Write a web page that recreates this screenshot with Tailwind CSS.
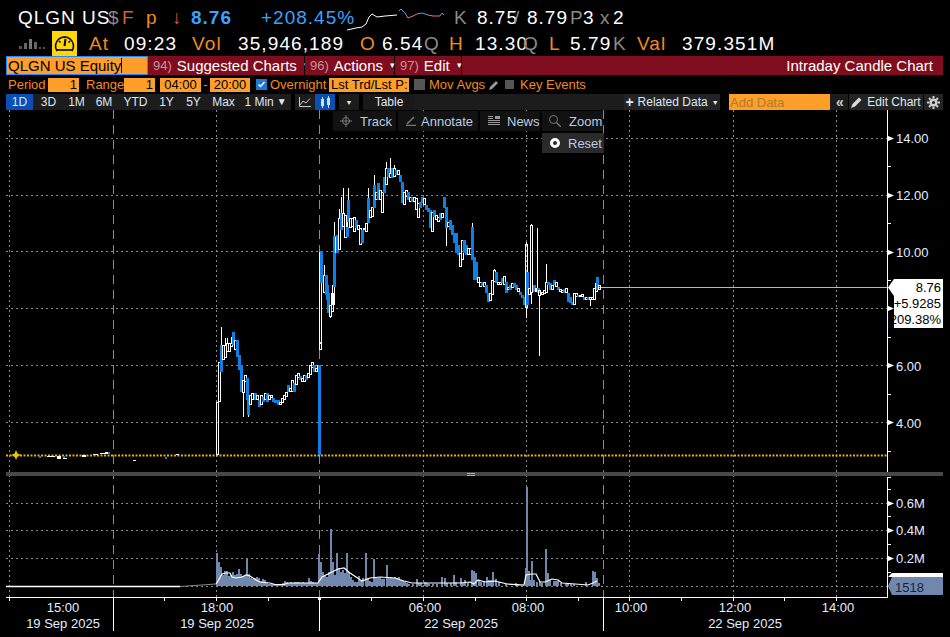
<!DOCTYPE html>
<html lang="en">
<head>
    <meta charset="UTF-8">
    <title>QLGN US Equity - Intraday Candle Chart</title>
    <script src="https://cdn.jsdelivr.net/npm/@tailwindcss/browser@4"></script>
</head>
<body class="bg-black text-white font-['Liberation_Sans',sans-serif] w-[950px] h-[637px] overflow-hidden relative">

    <!-- quote line 1 -->
    <div class="flex items-center h-[30px] pt-[5px] pl-[18px] text-[19px] tracking-[1px] whitespace-nowrap leading-none">
        <span class="w-[90px] shrink-0">QLGN US</span>
        <span class="w-[14px] shrink-0 text-[#8a8a8a]">$</span>
        <span class="w-[24px] shrink-0 text-[#c8643c]">F</span>
        <span class="w-[26px] shrink-0 text-[#f08c1e]">p</span>
        <span class="w-[19px] shrink-0 text-[#e8503c]">↓</span>
        <span class="w-[70px] shrink-0 text-[#3fa0ff] font-bold">8.76</span>
        <span class="w-[86px] shrink-0 text-[#3fa0ff]">+208.45%</span>
        <svg class="w-[107px] h-[30px] shrink-0" viewBox="347 0 107 30">
            <polyline fill="none" stroke="#fff" points="347,27 356,25 362,24 366,21 369,14 372,11 377,14 385,13 397,12" />
            <polyline fill="none" stroke="#4aa0e8" points="399,8 401,6 405,10" />
            <polyline fill="none" stroke="#e07a7a" points="405,10 408,15 413,13 417,11" />
            <polyline fill="none" stroke="#4aa0e8" points="417,11 422,10 428,12" />
            <polyline fill="none" stroke="#e07a7a" points="428,12 433,13 440,13" />
            <polyline fill="none" stroke="#4aa0e8" points="440,13 442,10 444,12" />
        </svg>
        <span class="w-[23px] shrink-0 text-[#8a8a8a]">K</span>
        <span class="w-[37px] shrink-0">8.75</span>
        <span class="w-[13px] shrink-0 text-[#8a8a8a]">/</span>
        <span class="w-[43px] shrink-0">8.79</span>
        <span class="w-[13px] shrink-0 text-[#8a8a8a]">P</span>
        <span class="w-[17px] shrink-0">3</span>
        <span class="w-[13px] shrink-0 text-[#8a8a8a]">x</span>
        <span class="shrink-0">2</span>
    </div>

    <!-- quote line 2 -->
    <div class="flex items-center h-[26px] pl-[19px] text-[19px] tracking-[1.1px] whitespace-nowrap leading-none">
        <svg class="w-[33px] h-[14px] shrink-0" viewBox="0 0 33 14">
            <rect x="0" y="10" width="3" height="3" fill="#555" />
            <rect x="5" y="7" width="3" height="6" fill="#666" />
            <rect x="10" y="3" width="3" height="10" fill="#777" />
            <rect x="15" y="6" width="3" height="7" fill="#666" />
            <rect x="20" y="11" width="2" height="2" fill="#555" />
            <rect x="24" y="11" width="2" height="2" fill="#555" />
        </svg>
        <span class="w-[25px] h-[25px] bg-[#ffd60a] shrink-0 flex items-center justify-center">
            <svg class="w-[21px] h-[19px]" viewBox="0 0 21 19" fill="none" stroke="#000" stroke-width="1.6">
                <path d="M3 17 A9 9 0 1 1 18 17" />
                <path d="M3 16 H18" />
                <path d="M10.5 12 L11.5 5" stroke-width="2" />
                <path d="M5 7 l1.500 1.500 M16 7 l-1.500 1.500 M10.500 2.500 v1.500" />
            </svg>
        </span>
        <span class="w-[12px] shrink-0"></span>
        <span class="w-[35px] shrink-0 text-[#f08c1e]">At</span>
        <span class="w-[68px] shrink-0">09:23</span>
        <span class="w-[46px] shrink-0 text-[#f08c1e]">Vol</span>
        <span class="w-[122px] shrink-0">35,946,189</span>
        <span class="w-[22px] shrink-0 text-[#f08c1e]">O</span>
        <span class="w-[42px] shrink-0">6.54</span>
        <span class="w-[25px] shrink-0 text-[#8a8a8a]">Q</span>
        <span class="w-[26px] shrink-0 text-[#f08c1e]">H</span>
        <span class="w-[48px] shrink-0">13.30</span>
        <span class="w-[26px] shrink-0 text-[#8a8a8a]">Q</span>
        <span class="w-[21px] shrink-0 text-[#f08c1e]">L</span>
        <span class="w-[43px] shrink-0">5.79</span>
        <span class="w-[24px] shrink-0 text-[#8a8a8a]">K</span>
        <span class="w-[45px] shrink-0 text-[#f08c1e]">Val</span>
        <span class="shrink-0">379.351M</span>
    </div>

    <!-- command bar -->
    <div class="flex h-[19px] ml-[6px] w-[937px] text-[15px] leading-none whitespace-nowrap">
        <div class="w-[142px] shrink-0 bg-[#ff9e28] border border-[#1e8cff] text-black text-[15px] pl-[1px] flex items-center">QLGN US Equity<span class="w-px h-[15px] bg-black"></span></div>
        <div class="w-[156px] shrink-0 bg-[#800d1e] flex items-center pl-[5px] gap-[5px] mr-[1px]">
            <span class="text-[#c8909a] text-[13px]">94)</span><span>Suggested Charts</span><span class="text-[9px] ml-[2px]">▾</span>
        </div>
        <div class="w-[89px] shrink-0 bg-[#800d1e] flex items-center pl-[5px] gap-[5px] mr-[1px]">
            <span class="text-[#c8909a] text-[13px]">96)</span><span>Actions</span><span class="text-[9px] ml-[2px]">▾</span>
        </div>
        <div class="w-[66px] shrink-0 bg-[#800d1e] flex items-center pl-[5px] gap-[5px] mr-[1px]">
            <span class="text-[#c8909a] text-[13px]">97)</span><span>Edit</span><span class="text-[9px] ml-[2px]">▾</span>
        </div>
        <div class="flex-1 bg-[#800d1e] flex items-center justify-end pr-[10px] text-[15px]">Intraday Candle Chart</div>
    </div>

    <!-- settings row -->
    <div class="flex items-center h-[19px] pl-[8px] text-[13px] leading-none text-[#f08c1e] whitespace-nowrap">
        <span class="w-[40px] shrink-0">Period</span>
        <span class="w-[31px] h-[14px] shrink-0 bg-[#ff9e28] text-black text-right pr-[2px] flex items-center justify-end">1</span>
        <span class="w-[7px] shrink-0"></span>
        <span class="w-[38px] shrink-0">Range</span>
        <span class="w-[31px] h-[14px] shrink-0 bg-[#ff9e28] text-black flex items-center justify-end pr-[2px]">1</span>
        <span class="w-[5px] shrink-0"></span>
        <span class="w-[41px] h-[14px] shrink-0 bg-[#ff9e28] text-black flex items-center justify-center">04:00</span>
        <span class="w-[9px] shrink-0 text-center">-</span>
        <span class="w-[40px] h-[14px] shrink-0 bg-[#ff9e28] text-black flex items-center justify-center">20:00</span>
        <span class="w-[6px] shrink-0"></span>
        <span class="w-[11px] h-[11px] shrink-0 bg-[#1e78d2] flex items-center justify-center">
            <svg class="w-[9px] h-[9px]" viewBox="0 0 9 9" fill="none" stroke="#fff" stroke-width="1.500"><path d="M1.500 4.500 L3.500 6.500 L7.500 2" /></svg>
        </span>
        <span class="w-[3px] shrink-0"></span>
        <span class="w-[59px] shrink-0">Overnight</span>
        <span class="w-[80px] h-[14px] shrink-0 bg-[#ff9e28] text-black flex items-center pl-[2px] overflow-hidden">Lst Trd/Lst P:</span>
        <span class="w-[5px] shrink-0"></span>
        <span class="w-[11px] h-[11px] shrink-0 bg-[#555]"></span>
        <span class="w-[4px] shrink-0"></span>
        <span class="w-[60px] shrink-0">Mov Avgs</span>
        <svg class="w-[12px] h-[12px] shrink-0 -ml-[1px]" viewBox="0 0 12 12" fill="#999"><path d="M1 11 L2 8 L8 2 L10 4 L4 10 Z" /></svg>
        <span class="w-[5px] shrink-0"></span>
        <span class="w-[9px] h-[9px] shrink-0 bg-[#555]"></span>
        <span class="w-[6px] shrink-0"></span>
        <span class="shrink-0">Key Events</span>
    </div>

    <!-- tabs row -->
    <div class="flex items-stretch h-[16px] ml-[6px] w-[937px] bg-[#1c1c1c] text-[12px] leading-none text-[#dfe8f5] whitespace-nowrap">
        <span class="w-[27px] bg-[#0a50b4] flex items-center justify-center">1D</span>
        <span class="w-[29px] ml-px flex items-center justify-center">3D</span>
        <span class="w-[27px] flex items-center justify-center">1M</span>
        <span class="w-[28px] flex items-center justify-center">6M</span>
        <span class="w-[35px] flex items-center justify-center">YTD</span>
        <span class="w-[27px] flex items-center justify-center">1Y</span>
        <span class="w-[27px] flex items-center justify-center">5Y</span>
        <span class="w-[33px] flex items-center justify-center">Max</span>
        <span class="w-[51px] flex items-center justify-center gap-[3px]">1 Min <span class="text-[10px]">▼</span></span>
        <span class="w-[4px] bg-black"></span>
        <span class="w-[19px] flex items-center justify-center">
            <svg class="w-[12px] h-[10px]" viewBox="0 0 12 10" fill="none" stroke="#c8c8c8"><path d="M0.500 0 V9.500 H12 M1 8 L4 4 L7 6 L11 1.500" /></svg>
        </span>
        <span class="w-[20px] ml-px bg-[#0a50b4] flex items-center justify-center">
            <svg class="w-[11px] h-[13px]" viewBox="0 0 11 13" fill="#cfe0ff"><rect x="1" y="3" width="3" height="7" /><rect x="2" y="1" width="1" height="11" /><rect x="7" y="2" width="3" height="7" /><rect x="8" y="0" width="1" height="12" /></svg>
        </span>
        <span class="w-[4px] bg-black"></span>
        <span class="w-[20px] flex items-center justify-center text-[7px]">▼</span>
        <span class="w-[4px] bg-black"></span>
        <span class="w-[52px] flex items-center justify-center bg-[#191919]">Table</span>
        <span class="w-[209px]"></span>
        <span class="w-[96px] flex items-center justify-center gap-[4px] bg-[#242424]"><span class="font-bold text-[14px]">+</span>Related Data<span class="text-[7px]">▼</span></span>
        <span class="w-[9px] bg-black"></span>
        <span class="w-[101px] bg-[#ff9e28] text-[#b07a30] flex items-center text-[13px] pl-[1px]">Add Data</span>
        <span class="w-[2px]"></span>
        <span class="w-[16px] flex items-center justify-center text-[14px] text-[#cfcfcf] font-bold">«</span>
        <span class="w-[1px] bg-black"></span>
        <span class="w-[74px] flex items-center justify-center gap-[4px] bg-[#242424]">
            <svg class="w-[12px] h-[12px]" viewBox="0 0 12 12" fill="#ddd"><path d="M0 12 L1.500 8 L8 1.500 L10.500 4 L4 10.500 Z" /></svg>Edit Chart
        </span>
        <span class="w-[1px] bg-black"></span>
        <span class="flex-1 flex items-center justify-center text-[#cfcfcf] bg-[#242424]">
            <svg class="w-[13px] h-[13px]" viewBox="0 0 13 13" fill="none" stroke="#cfcfcf"><circle cx="6.500" cy="6.500" r="2.800" stroke-width="2.400" /><path stroke-width="2" d="M6.500 0 V2.500 M6.500 10.500 V13 M0 6.500 H2.500 M10.500 6.500 H13 M2 2 L3.700 3.700 M9.300 9.300 L11 11 M2 11 L3.700 9.300 M9.300 3.700 L11 2" /></svg>
        </span>
    </div>

    <!-- chart -->
    <svg id="chart" class="block w-[950px] h-[527px]" viewBox="0 110 950 527" font-size="13" font-family="Liberation Sans, sans-serif">
        <g id="grid" stroke="#8a8a8a" fill="none" shape-rendering="crispEdges">
            <path stroke-dasharray="2 3" d="M6 138.500H887 M6 195.500H887 M6 251.500H887 M6 308.500H887 M6 365.500H887 M6 422.500H887" />
            <path stroke-dasharray="2 3" d="M6 503.500H887 M6 530.500H887 M6 558.500H887 M6 586.500H887" />
            <path stroke-dasharray="2 3" d="M9.500 110V597 M216.500 110V597 M423.500 110V597 M526.500 110V597 M629.500 110V597 M733.500 110V597 M836.500 110V597" />
            <path stroke-dasharray="9 6" d="M113.500 110V597 M319.500 110V597 M603.500 110V597" />
        </g>
        <rect x="6" y="472" width="937" height="4" fill="#484848" />
        <path d="M467 473.500h8 M467 475.500h8" stroke="#aaa" />
        <g id="vol" fill="#7088ad" shape-rendering="crispEdges"></g>
        <path d="M6 586.500H180" stroke="#fff" stroke-width="1.500" />
        <path d="M180 586.500L216 584" stroke="#888" stroke-width="1.200" />
        <polyline fill="none" stroke="#fff" stroke-width="1.200" points="216,584 218,581 222,574 226,573 230,573 232,577 236,578 242,577 246,575 250,576 256,580 260,582 270,583 275,584.500 284,584.500 288,583 300,583 318,583 322,577 330,573 338,569 344,568 350,573 356,577 362,581 370,578 380,577 395,578 404,581 412,583 430,583 460,583 470,582 474,584 478,580 485,582 495,581 507,584 524,585 526,575 532,574 536,574 540,582 545,582 552,579 558,580 562,583 575,584 588,585 593,583 597,581" />
        <path d="M598 287.500H887" stroke="#d8bc50" />
        <path d="M6 455.500H887" stroke="#e8b400" stroke-width="2" stroke-dasharray="2 1.500" />
        <path d="M16 450l1.500 3.500 3.500 1.500-3.500 1.500-1.500 3.500-1.500-3.500-3.500-1.500 3.500-1.500z" fill="#e8c800" />
        <g id="candles" shape-rendering="crispEdges"></g>
        <!-- early session scraps near the base line -->
        <g fill="#fff" shape-rendering="crispEdges">
            <rect x="47" y="456" width="8" height="1" /><rect x="57" y="456" width="4" height="3" /><rect x="63" y="458" width="4" height="1" />
            <rect x="82" y="455" width="4" height="2" /><rect x="93" y="454" width="5" height="1" /><rect x="100" y="453" width="5" height="1" /><rect x="105" y="452" width="3" height="2" />
            <rect x="133" y="460" width="3" height="1" /><rect x="176" y="454" width="3" height="1" />
        </g>
        <g fill="#0f7fe8" shape-rendering="crispEdges">
            <rect x="39" y="456" width="2" height="2" /><rect x="63" y="456" width="2" height="2" /><rect x="108" y="452" width="2" height="2" /><rect x="165" y="457" width="2" height="2" />
        </g>
        <!-- axes -->
        <g stroke="#fff" fill="none" shape-rendering="crispEdges">
            <path d="M887.500 110V472 M887.500 477V597.500 M6 597.500H887" />
            <path d="M113.500 597V631 M319.500 597V631 M603.500 597V631" />
            <path d="M9.500 597V601 M164.500 597V601 M216.500 597V601 M268.500 597V601 M371.500 597V601 M423.500 597V601 M475.500 597V601 M526.500 597V601 M578.500 597V601 M629.500 597V601 M681.500 597V601 M733.500 597V601 M784.500 597V601 M836.500 597V601" />
            <path d="M887 166.500h4 M887 223.500h4 M887 280.500h4 M887 337.500h4 M887 394.500h4 M887 451.500h4 M887 477.500h4 M887 489.500h4 M887 516.500h4 M887 544.500h4 M887 572.500h4" />
        </g>
        <rect x="318" y="597" width="3" height="3" fill="#fff" />
        <g fill="#fff">
            <path d="M887 135.500l7 3-7 3z M887 192.500l7 3-7 3z M887 249.500l7 3-7 3z M887 362.500l7 3-7 3z M887 419.500l7 3-7 3z M887 500.500l7 3-7 3z M887 527.500l7 3-7 3z M887 555.500l7 3-7 3z M887 305.500l7 3-7 3z" />
        </g>
        <g fill="#e4eeff">
            <text x="896" y="143">14.00</text>
            <text x="896" y="200">12.00</text>
            <text x="896" y="257">10.00</text>
            <text x="896" y="371">6.00</text>
            <text x="896" y="428">4.00</text>
            <text x="896" y="508">0.6M</text>
            <text x="896" y="535">0.4M</text>
            <text x="896" y="563">0.2M</text>
        </g>
        <g fill="#e4eeff" text-anchor="middle">
            <text x="63" y="612">15:00</text>
            <text x="63" y="628">19 Sep 2025</text>
            <text x="217" y="612">18:00</text>
            <text x="217" y="628">19 Sep 2025</text>
            <text x="425" y="612">06:00</text>
            <text x="461" y="628">22 Sep 2025</text>
            <text x="528" y="612">08:00</text>
            <text x="631" y="612">10:00</text>
            <text x="735" y="612">12:00</text>
            <text x="838" y="612">14:00</text>
            <text x="745" y="628">22 Sep 2025</text>
        </g>
        <!-- last price tag -->
        <path d="M888 287.500L894 279H943V328H894V296z" fill="#fff" />
        <g fill="#000" text-anchor="end">
            <text x="941" y="292">8.76</text>
            <text x="941" y="308">+5.9285</text>
            <text x="941" y="324">209.38%</text>
        </g>
        <!-- volume tag -->
        <path d="M888 577L892 573H943V577z" fill="#fff" />
        <path d="M888 586L892 577H943V595H892z" fill="#7088ad" />
        <text x="895" y="592" fill="#1a2233">1518</text>
    </svg>

    <!-- chart tool popups -->
    <div class="absolute left-[333px] top-[111px] w-[270px] h-[20px] flex gap-[2px] text-[13px] text-[#b8cce4] leading-none whitespace-nowrap">
        <span class="w-[63px] bg-[#141414]/90 flex items-center gap-[8px] pl-[7px]">
            <svg class="w-[12px] h-[12px]" viewBox="0 0 12 12" fill="none" stroke="#777"><circle cx="6" cy="6" r="3.500" /><path d="M6 0V12M0 6H12" /></svg>Track
        </span>
        <span class="w-[80px] bg-[#141414]/90 flex items-center gap-[5px] pl-[8px]">
            <svg class="w-[10px] h-[10px]" viewBox="0 0 10 10" fill="none" stroke="#777"><path d="M0 9.500H10 M1 8L8 1" stroke-width="1.500" /></svg>Annotate
        </span>
        <span class="w-[60px] bg-[#141414]/90 flex items-center gap-[7px] pl-[8px]">
            <svg class="w-[12px] h-[10px]" viewBox="0 0 12 10" fill="none" stroke="#999"><path d="M0 .5H5 M0 2.500H5 M0 4.500H12 M0 6.500H12 M0 8.500H12" /><rect x="7" y="0" width="5" height="3" fill="#999" stroke="none" /></svg>News
        </span>
        <span class="w-[61px] bg-[#141414]/90 flex items-center gap-[8px] pl-[7px]">
            <svg class="w-[12px] h-[12px]" viewBox="0 0 12 12" fill="none" stroke="#777"><circle cx="4.500" cy="4.500" r="4" /><path d="M7.500 7.500L12 12" stroke-width="1.500" /></svg>Zoom
        </span>
    </div>
    <div class="absolute left-[542px] top-[133px] w-[62px] h-[20px] bg-[#2a2a2a] flex items-center gap-[8px] pl-[8px] text-[13px] text-[#b8cce4] leading-none">
        <span class="w-[10px] h-[10px] rounded-full border-[3px] border-white"></span>Reset
    </div>

    <script>
        // [x, top, bottom, type, wickTop, wickBottom]  b = blue body, w = hollow white
        var candles = [
            [216,402,455,'w'],[218,362,402,'w'],[220,345,372,'b',327,372],[222,345,360,'w'],[224,345,358,'w',338],[226,343,352,'w',338],[228,343,352,'w'],[230,343,347,'w',337],[232,332,345,'b'],[234,340,350,'w'],[236,340,357,'b'],[238,355,370,'b'],[240,365,392,'b'],[242,380,393,'w',0,417],[244,375,382,'w'],[246,378,400,'b'],[247,400,415,'b',0,417],[249,395,405,'w'],[251,393,400,'w'],[254,393,400,'b'],[256,395,400,'w'],[258,400,407,'b'],[260,395,405,'w'],[262,397,402,'b'],[264,393,400,'w'],[266,393,402,'b'],[268,395,400,'w'],[270,395,398,'w'],[272,398,402,'b'],[274,400,403,'b'],[277,400,405,'b'],[279,402,405,'w'],[281,398,403,'w'],[283,395,400,'w'],[285,392,397,'w'],[287,385,392,'b'],[289,388,392,'w'],[291,380,392,'w'],[293,383,392,'b'],[295,375,385,'w'],[297,373,378,'w'],[299,376,380,'b'],[301,378,382,'w'],[303,375,382,'w'],[305,375,380,'b'],[307,373,378,'w'],[309,365,375,'w'],[311,362,368,'w'],[313,365,372,'b'],[315,368,372,'w'],[317,365,372,'w'],
            [318,365,455,'b'],[319,343,350,'w'],[319,252,343,'w'],[320,251,283,'b'],[323,275,293,'w',265],[325,275,295,'b'],[326,285,300,'b'],[327,293,313,'b'],[329,305,317,'w',0,318],[331,293,312,'w'],[332,285,305,'w'],[333,236,287,'b',222],[335,237,253,'w'],[336,235,253,'b'],[338,218,250,'w',209],[340,213,230,'b',197],[342,213,227,'w',188],[344,215,238,'w'],[346,227,237,'b',210],[347,200,222,'b',188],[349,218,228,'w'],[351,218,227,'w'],[353,217,232,'w'],[355,220,228,'b'],[357,225,230,'w'],[359,228,245,'w'],[361,230,243,'b'],[363,228,230,'w'],[365,223,232,'w'],[367,198,223,'b',188],[369,210,218,'w'],[371,207,217,'w'],[373,185,208,'b',175],[375,192,200,'w'],[377,183,200,'b'],[379,190,200,'w'],[381,192,213,'w'],[383,177,193,'b'],[385,168,185,'w',162],[387,168,177,'b'],[389,173,178,'w',158],[391,168,178,'b'],[393,168,177,'w',165],[395,170,175,'b'],[397,170,175,'w'],[399,175,182,'b'],[401,182,203,'b'],[403,192,205,'w'],[405,190,197,'w'],[407,192,200,'b'],[409,197,202,'w'],[411,197,202,'b'],[413,197,202,'w'],[415,198,210,'w'],[417,203,218,'w'],[419,202,208,'b'],[421,197,203,'b'],[423,198,205,'w'],[425,205,210,'b'],[427,208,212,'b'],[429,210,228,'b'],[431,212,232,'w'],[433,210,217,'b'],[435,215,220,'w'],[437,217,222,'w'],[439,213,220,'b'],[441,213,218,'w'],[443,197,208,'b'],[445,207,228,'b',0,246],[447,222,227,'w'],[449,220,230,'b'],[451,225,235,'b'],[453,233,243,'b'],[455,233,253,'b'],[457,245,255,'b'],[459,253,267,'w'],[461,240,260,'w'],[463,240,253,'b'],[465,245,255,'b'],[467,248,255,'w'],[469,248,255,'w'],[471,227,260,'b',223],[473,257,280,'b'],[475,262,280,'b'],[477,277,283,'w'],[479,282,287,'w'],[481,282,286,'b'],[483,282,287,'w'],[485,285,293,'b'],[487,293,302,'b'],[489,293,301,'w'],[491,280,295,'w'],[493,270,282,'w',269],[495,272,283,'b'],[497,282,285,'w'],[499,282,285,'w'],[501,278,283,'b'],[503,276,285,'w'],[505,282,293,'b'],[507,287,290,'w'],[509,285,290,'b'],[511,283,288,'w'],[513,283,287,'b'],[515,285,290,'b'],[517,288,292,'w'],[519,292,295,'b'],[521,295,298,'b'],[523,297,305,'b'],
            [525,244,308,'w',242,318],[526,272,305,'b'],[528,288,295,'w'],[530,225,293,'w',224,304],[533,285,292,'b'],[535,288,292,'w'],[536,288,292,'w',228],[537,288,293,'b'],[538,290,296,'w',0,356],[541,292,295,'w'],[543,290,294,'w'],[545,282,293,'w',264],[547,282,285,'b'],[549,283,290,'b'],[551,285,290,'w'],[553,280,285,'b'],[555,282,287,'w'],[557,287,290,'b'],[559,289,292,'w'],[561,290,293,'w'],[563,289,293,'b'],[565,288,293,'w'],[567,293,302,'b'],[569,297,303,'b'],[571,302,305,'b'],[573,293,305,'w'],[575,293,297,'w'],[577,295,297,'b'],[579,295,297,'w'],[581,294,297,'w'],[583,297,300,'b'],[585,297,300,'w'],[587,297,300,'b'],[589,297,300,'w',0,306],[591,297,300,'w'],[593,288,300,'w'],[595,283,292,'w'],[596,277,290,'b'],[598,285,290,'w']
        ];
        var vols = [[216,33],[218,24],[220,19],[222,11],[224,15],[226,15],[228,10],[230,11],[232,14],[234,11],[236,12],[238,17],[240,12],[242,10],[244,10],[246,28],[248,12],[250,8],[252,7],[254,8],[256,9],[258,8],[260,5],[262,7],[264,6],[266,3],[268,2],[270,2],[272,2],[274,2],[276,2],[278,2],[280,2],[282,3],[284,5],[286,4],[288,3],[290,4],[292,3],[294,4],[296,4],[298,4],[300,3],[302,4],[304,3],[306,3],[308,8],[310,5],[312,4],[314,3],[316,3],[318,32],[320,24],[322,14],[324,10],[326,9],[328,14],[330,57],[332,24],[334,11],[336,33],[338,18],[340,14],[342,16],[344,13],[346,33],[348,14],[350,9],[352,6],[354,4],[356,4],[358,10],[360,5],[362,8],[365,33],[367,8],[369,5],[371,4],[373,27],[375,8],[377,8],[379,8],[381,7],[383,7],[386,21],[388,8],[390,9],[392,8],[394,9],[396,8],[398,9],[400,6],[402,5],[404,4],[406,3],[408,2],[412,2],[416,7],[418,3],[420,3],[424,4],[426,3],[428,2],[432,2],[436,2],[441,9],[444,8],[446,3],[450,3],[453,11],[455,4],[460,8],[462,3],[464,6],[467,3],[471,16],[473,15],[475,13],[478,6],[480,4],[483,5],[486,9],[488,6],[490,6],[492,14],[495,7],[498,4],[505,2],[515,3],[517,2],[525,18],[526,99],[528,15],[530,6],[531,25],[533,6],[536,4],[539,4],[541,3],[545,37],[547,13],[549,6],[553,5],[555,5],[557,5],[560,3],[565,2],[567,3],[570,2],[573,2],[585,4],[592,15],[594,14],[596,8],[598,3]];

        var ns = 'http://www.w3.org/2000/svg';
        var candleGroup = document.getElementById('candles');
        var volGroup = document.getElementById('vol');

        function add(parent, tag, attrs) {
            var el = document.createElementNS(ns, tag);
            for (var k in attrs) el.setAttribute(k, attrs[k]);
            parent.appendChild(el);
        }

        candles.forEach(function (c) {
            var x = c[0], top = c[1], bot = c[2], type = c[3];
            var wt = c[4] || top, wb = c[5] || bot;
            if (wt < top) add(candleGroup, 'rect', { x: x + 1, y: wt, width: 1, height: top - wt, fill: '#fff' });
            if (wb > bot) add(candleGroup, 'rect', { x: x + 1, y: bot, width: 1, height: wb - bot, fill: '#fff' });
            if (type === 'b') {
                add(candleGroup, 'rect', { x: x, y: top, width: 3, height: bot - top, fill: '#0f7fe8' });
            } else {
                add(candleGroup, 'rect', { x: x + .5, y: top + .5, width: 2, height: Math.max(bot - top - 1, 1), fill: 'none', stroke: '#fff' });
            }
        });

        vols.forEach(function (v) {
            add(volGroup, 'rect', { x: v[0], y: 586 - v[1], width: 2, height: v[1], fill: '#7088ad' });
        });
    </script>
</body>
</html>
